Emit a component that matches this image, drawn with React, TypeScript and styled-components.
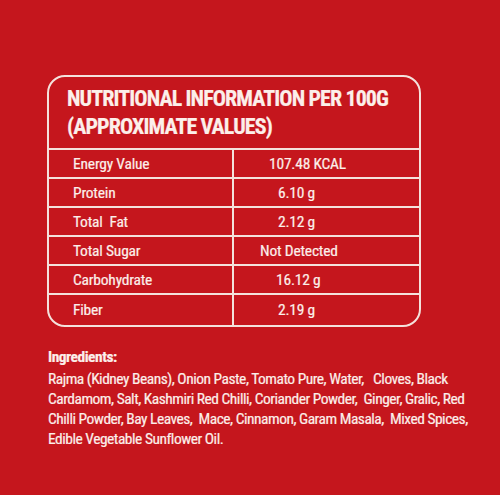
import React from 'react';
import styled, { createGlobalStyle } from 'styled-components';

const nutrients = [
  { label: 'Energy Value', value: '107.48 KCAL', indent: 35 },
  { label: 'Protein', value: '6.10 g', indent: 44 },
  { label: 'Total  Fat', value: '2.12 g', indent: 44 },
  { label: 'Total Sugar', value: 'Not Detected', indent: 26 },
  { label: 'Carbohydrate', value: '16.12 g', indent: 42 },
  { label: 'Fiber', value: '2.19 g', indent: 44 },
];

const ingredientLines = [
  'Rajma (Kidney Beans), Onion Paste, Tomato Pure, Water,   Cloves, Black',
  'Cardamom, Salt, Kashmiri Red Chilli, Coriander Powder,  Ginger, Gralic, Red',
  'Chilli Powder, Bay Leaves,  Mace, Cinnamon, Garam Masala,  Mixed Spices,',
  'Edible Vegetable Sunflower Oil.',
];

const App = () => {
  return (
    <Page>
      <GlobalStyle />
      <Panel>
        <Title>
          NUTRITIONAL INFORMATION PER 100G
          <br />
          (APPROXIMATE VALUES)
        </Title>
        <Table>
          {nutrients.map((n, i) => (
            <Row key={n.label} last={i === nutrients.length - 1}>
              <Label>{n.label}</Label>
              <Value style={{ paddingLeft: n.indent }}>{n.value}</Value>
            </Row>
          ))}
        </Table>
      </Panel>
      <Ingredients>
        <IngredientsTitle>Ingredients:</IngredientsTitle>
        {ingredientLines.map((line) => (
          <IngredientLine key={line}>{line}</IngredientLine>
        ))}
      </Ingredients>
    </Page>
  );
};

export default App;

const GlobalStyle = createGlobalStyle`
  body {
    margin: 0;
    background: #c5161d;
  }
`;

const Page = styled.div`
  width: 500px;
  height: 495px;
  box-sizing: border-box;
  padding: 75px 0 0 47px;
  background: #c5161d;
  color: #fcefea;
  font-family: 'Liberation Sans Narrow', 'Roboto Condensed', 'DejaVu Sans Condensed', 'Liberation Sans', sans-serif;
  -webkit-text-stroke: 0.2px #fcefea;
  overflow: hidden;
`;

const Panel = styled.div`
  width: 374px;
  height: 252px;
  box-sizing: border-box;
  border: 2px solid #f4e2dc;
  border-radius: 18px;
  overflow: hidden;
  display: flex;
  flex-direction: column;
`;

const Title = styled.div`
  padding: 8px 0 7px 18px;
  font-size: 22px;
  line-height: 28px;
  font-weight: 700;
  letter-spacing: -0.9px;
  white-space: nowrap;
`;

const Table = styled.div`
  flex: 1;
  display: flex;
  flex-direction: column;
`;

const Row = styled.div<{ last?: boolean }>`
  display: grid;
  grid-template-columns: 185px 1fr;
  height: ${(p) => (p.last ? 'auto' : '27px')};
  flex: ${(p) => (p.last ? 1 : 'none')};
  border-top: 2px solid #f4e2dc;
  font-size: 15.5px;
  letter-spacing: -0.2px;
`;

const Label = styled.div`
  display: flex;
  align-items: center;
  padding-left: 24px;
  border-right: 2px solid #f4e2dc;
  white-space: pre;
`;

const Value = styled.div`
  display: flex;
  align-items: center;
  white-space: pre;
`;

const Ingredients = styled.div`
  margin-top: 20px;
  margin-left: 1px;
  font-size: 15.5px;
  line-height: 20px;
  letter-spacing: -0.5px;
`;

const IngredientsTitle = styled.div`
  font-weight: 700;
  margin-bottom: 2px;
`;

const IngredientLine = styled.div`
  white-space: pre;
`;
